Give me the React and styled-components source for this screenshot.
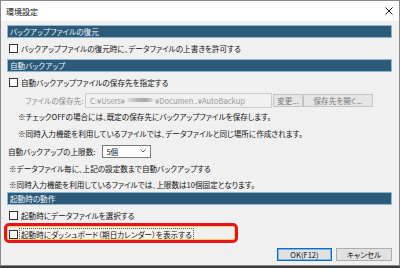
import React from "react";
import styled, { createGlobalStyle } from "styled-components";

const GlobalStyle = createGlobalStyle`
  html, body {
    margin: 0;
    padding: 0;
    background: #3c3c3c;
  }
  body {
    font-family: "Noto Sans CJK JP", "Noto Sans", sans-serif;
    font-feature-settings: "palt";
    font-size: 7.6px;
    color: #111;
  }
`;

const Window = styled.div`
  width: 400px;
  height: 266px;
  box-sizing: border-box;
  border: 1px solid #8a8a8a;
  background: #f0f0f0;
  display: flex;
  flex-direction: column;
`;

const TitleBar = styled.div`
  height: 20px;
  background: #fff;
  display: flex;
  align-items: center;
  justify-content: space-between;
  padding: 0 5px 0 5px;
  font-size: 8px;
`;

const CloseIcon = styled.svg`
  width: 8px;
  height: 8px;
  margin-right: 1px;
`;

const Body = styled.div`
  flex: 1;
  display: flex;
  flex-direction: column;
  padding: 4px 7px 0 6px;
`;

const SectionHeader = styled.div`
  height: 13px;
  box-sizing: border-box;
  background: #2c5a79;
  border: 1px solid #8fb6d3;
  color: #f2f6f9;
  display: flex;
  align-items: center;
  padding-left: 2px;
`;

const Row = styled.div`
  position: relative;
  height: ${(p) => p.h}px;
  display: flex;
  align-items: center;
  padding-left: ${(p) => p.indent || 2}px;
  color: ${(p) => (p.muted ? "#8d8d8d" : "inherit")};
`;

const Box = styled.span`
  width: 9px;
  height: 9px;
  box-sizing: border-box;
  border: 1px solid #333;
  background: #fff;
  margin-right: 2px;
  flex: none;
`;

const Label = styled.span`
  line-height: 11px;
  padding: 0 1px;
  border: 1px ${(p) => (p.focus ? "dotted #555" : "solid transparent")};
  background: ${(p) => (p.focus ? "#f7f5f0" : "transparent")};
  margin-left: -1px;
`;

const FieldLabel = styled.span`
  width: 60px;
  flex: none;
`;

const PathInput = styled.div`
  width: 187px;
  height: 15px;
  box-sizing: border-box;
  border: 1px solid #cccccc;
  background: #f0f0f0;
  color: #9a9a9a;
  display: flex;
  align-items: center;
  padding-left: 4px;
`;

const Blur = styled.span`
  display: inline-block;
  width: 26px;
  height: 4px;
  margin: 0 2px;
  background: linear-gradient(90deg, #e0e0e0, #b5b5b5 40%, #a9a9a9 70%, #d6d6d6);
  border-radius: 2px;
`;

const SmallButton = styled.div`
  height: 13px;
  box-sizing: border-box;
  width: ${(p) => p.w}px;
  border: 1px solid #c4c4c4;
  background: #e5e5e5;
  color: #777;
  display: flex;
  align-items: center;
  justify-content: center;
  margin-left: ${(p) => p.ml || 0}px;
`;

const Select = styled.div`
  width: 49px;
  height: 13px;
  box-sizing: border-box;
  margin-left: 7px;
  border: 1px solid #7a7a7a;
  background: #fff;
  display: flex;
  align-items: center;
  justify-content: space-between;
  padding: 0 4px 0 3px;
`;

const Chevron = styled.svg`
  width: 6px;
  height: 4px;
`;

const Annotation = styled.div`
  position: absolute;
  left: -3px;
  top: -3px;
  width: 234px;
  height: 20px;
  box-sizing: border-box;
  border: 3px solid #e8141b;
  border-radius: 5px;
  box-shadow: inset 0 0 0 1px #f4cf6a;
  pointer-events: none;
`;

const Footer = styled.div`
  display: flex;
  justify-content: flex-end;
  gap: 4px;
  margin-top: 5px;
`;

const DialogButton = styled.div`
  width: ${(p) => p.w}px;
  height: 13px;
  box-sizing: border-box;
  border: 1px solid ${(p) => (p.primary ? "#0a6fc2" : "#adadad")};
  box-shadow: ${(p) => (p.primary ? "inset 0 0 0 1px #7fb5e3" : "none")};
  background: #e1e1e1;
  display: flex;
  align-items: center;
  justify-content: center;
`;

const Check = ({ children, h, focus }) => (
  <Row h={h}>
    <Box />
    <Label focus={focus}>{children}</Label>
    {focus && <Annotation />}
  </Row>
);

export default function App() {
  return (
    <>
      <GlobalStyle />
      <Window>
        <TitleBar>
          <span>環境設定</span>
          <CloseIcon viewBox="0 0 8 8">
            <path d="M0.5 0.5 L7.5 7.5 M7.5 0.5 L0.5 7.5" stroke="#222" strokeWidth="1" />
          </CloseIcon>
        </TitleBar>
        <Body>
          <SectionHeader>バックアップファイルの復元</SectionHeader>
          <Check h={21}>バックアップファイルの復元時に、データファイルの上書きを許可する</Check>
          <SectionHeader>自動バックアップ</SectionHeader>
          <Check h={20}>自動バックアップファイルの保存先を指定する</Check>
          <Row h={16} indent={18} muted>
            <FieldLabel>ファイルの保存先:</FieldLabel>
            <PathInput>
              C:¥Users¥
              <Blur />
              ¥Documen..¥AutoBackup
            </PathInput>
            <SmallButton w={30} ml={1}>変更...</SmallButton>
            <SmallButton w={70}>保存先を開く...</SmallButton>
          </Row>
          <Row h={17} indent={11}>※チェックOFFの場合には、既定の保存先にバックアップファイルを保存します。</Row>
          <Row h={17} indent={11}>※同時入力機能を利用しているファイルでは、データファイルと同じ場所に作成されます。</Row>
          <Row h={18} indent={1}>
            <span>自動バックアップの上限数:</span>
            <Select>
              <span>5個</span>
              <Chevron viewBox="0 0 6 4">
                <path d="M0.5 0.5 L3 3 L5.5 0.5" fill="none" stroke="#333" strokeWidth="0.8" />
              </Chevron>
            </Select>
          </Row>
          <Row h={16} indent={0}>※データファイル毎に、上記の設定数まで自動バックアップする</Row>
          <Row h={16} indent={0}>※同時入力機能を利用しているファイルでは、上限数は10個固定となります。</Row>
          <SectionHeader>起動時の動作</SectionHeader>
          <Check h={21}>起動時にデータファイルを選択する</Check>
          <Check h={17} focus>
            起動時にダッシュボード（期日カレンダー）を表示する
          </Check>
          <Footer>
            <DialogButton w={55} primary>OK(F12)</DialogButton>
            <DialogButton w={56}>キャンセル</DialogButton>
          </Footer>
        </Body>
      </Window>
    </>
  );
}
